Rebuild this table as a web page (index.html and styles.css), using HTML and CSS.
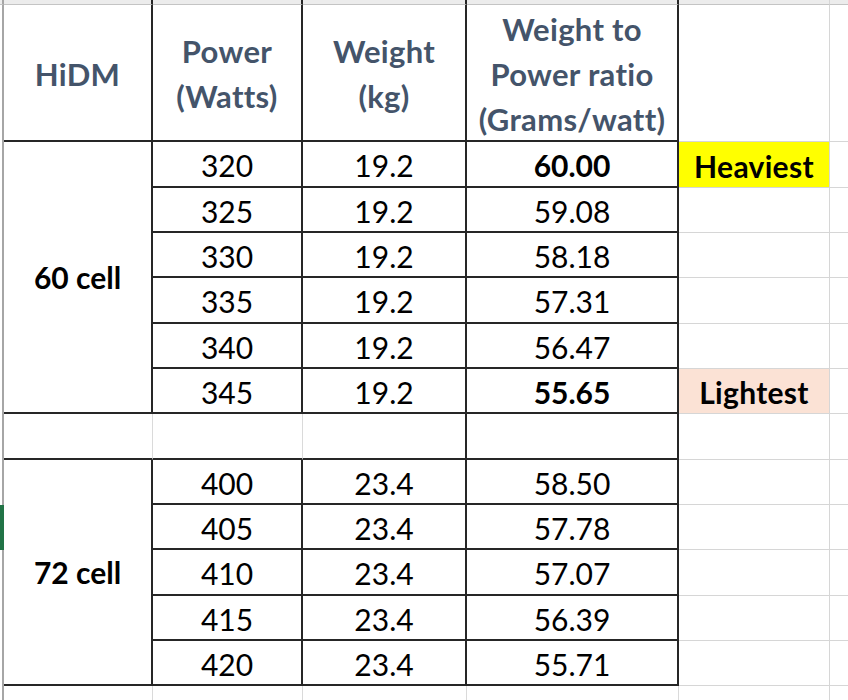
FILE: index.html
```html
<!DOCTYPE html>
<html>
<head>
<meta charset="utf-8">
<link rel="stylesheet" href="styles.css">
</head>
<body>
<div class="sheet">
  <!-- top band -->
  <div class="g top"></div><div class="ca top"></div><div class="cb top"></div><div class="cc top"></div><div class="cd top"></div><div class="ce top"></div><div class="cf top"></div>
  <!-- header -->
  <div class="g"></div>
  <div class="ca bk hd">HiDM</div>
  <div class="cb bk hd">Power<br>(Watts)</div>
  <div class="cc bk hd">Weight<br>(kg)</div>
  <div class="cd bk hd">Weight to<br>Power ratio<br>(Grams/watt)</div>
  <div class="ce gr"></div><div class="cf gr"></div>
  <!-- 60 cell -->
  <div class="g"></div>
  <div class="ca bk grp six">60 cell</div>
  <div class="cb bk v">320</div><div class="cc bk v">19.2</div><div class="cd bk v b">60.00</div><div class="ce gr v b heavy">Heaviest</div><div class="cf gr"></div>
  <div class="g"></div><div class="cb bk v">325</div><div class="cc bk v">19.2</div><div class="cd bk v">59.08</div><div class="ce gr"></div><div class="cf gr"></div>
  <div class="g"></div><div class="cb bk v">330</div><div class="cc bk v">19.2</div><div class="cd bk v">58.18</div><div class="ce gr"></div><div class="cf gr"></div>
  <div class="g"></div><div class="cb bk v">335</div><div class="cc bk v">19.2</div><div class="cd bk v">57.31</div><div class="ce gr"></div><div class="cf gr"></div>
  <div class="g"></div><div class="cb bk v">340</div><div class="cc bk v">19.2</div><div class="cd bk v">56.47</div><div class="ce gr"></div><div class="cf gr"></div>
  <div class="g"></div><div class="cb bk v">345</div><div class="cc bk v">19.2</div><div class="cd bk v b">55.65</div><div class="ce gr v b light">Lightest</div><div class="cf gr"></div>
  <!-- empty row -->
  <div class="g"></div><div class="ca bk soft"></div><div class="cb bk soft"></div><div class="cc bk"></div><div class="cd bk"></div><div class="ce gr"></div><div class="cf gr"></div>
  <!-- 72 cell -->
  <div class="g"></div>
  <div class="ca bk grp five">72 cell</div>
  <div class="cb bk v">400</div><div class="cc bk v">23.4</div><div class="cd bk v">58.50</div><div class="ce gr"></div><div class="cf gr"></div>
  <div class="g sel"></div><div class="cb bk v">405</div><div class="cc bk v">23.4</div><div class="cd bk v">57.78</div><div class="ce gr"></div><div class="cf gr"></div>
  <div class="g"></div><div class="cb bk v">410</div><div class="cc bk v">23.4</div><div class="cd bk v">57.07</div><div class="ce gr"></div><div class="cf gr"></div>
  <div class="g"></div><div class="cb bk v">415</div><div class="cc bk v">23.4</div><div class="cd bk v">56.39</div><div class="ce gr"></div><div class="cf gr"></div>
  <div class="g"></div><div class="cb bk v">420</div><div class="cc bk v">23.4</div><div class="cd bk v">55.71</div><div class="ce gr"></div><div class="cf gr"></div>
  <!-- below -->
  <div class="g"></div><div class="ca soft"></div><div class="cb soft"></div><div class="cc soft"></div><div class="cd soft"></div><div class="ce"></div><div class="cf"></div>
</div>
</body>
</html>
```

FILE: styles.css
```css
* { box-sizing: border-box; }
html, body { margin: 0; padding: 0; background: #fff; }
body { width: 848px; height: 700px; overflow: hidden; font-family: Lato, "Open Sans", sans-serif; }

.sheet {
  display: grid;
  grid-template-columns: 4px 149px 150px 164px 212px 151px 18px;
  grid-template-rows: 5px 137px 46px 45px 45px 46px 45px 45px 46px 45px 45px 46px 45px 45px 14px;
}

.sheet > div {
  display: flex;
  align-items: center;
  justify-content: center;
  text-align: center;
  font-size: 30px;
  color: #000;
}

.g { border-right: 2px solid #a6a6a6; }
.g.sel { background: #217346; border-right-color: #217346; }

.ca, .cb, .cc, .cd { border-right: 2px solid #262626; }
.ce { border-right: 1px solid #d6d6d6; }

.top { background: #ececec; border-bottom: 1px solid #c4c4c4; }

.bk { border-bottom: 2px solid #262626; }
.gr { border-bottom: 1px solid #d6d6d6; }

.soft { border-right: 1px solid #dadada; }

.sheet > .hd {
  color: #44546a;
  font-weight: 700;
  line-height: 45px;
  font-size: 31px;
  letter-spacing: 0.3px;
  padding-top: 3px;
}

.grp { font-weight: 700; }
.six { grid-row: span 6; }
.five { grid-row: span 5; }

.v { padding-top: 2px; }
.b { font-weight: 700; }

.sheet > .heavy { background: #ffff00; letter-spacing: 0.3px; }
.sheet > .light { background: #fbe2d5; letter-spacing: 0.3px; }
```
